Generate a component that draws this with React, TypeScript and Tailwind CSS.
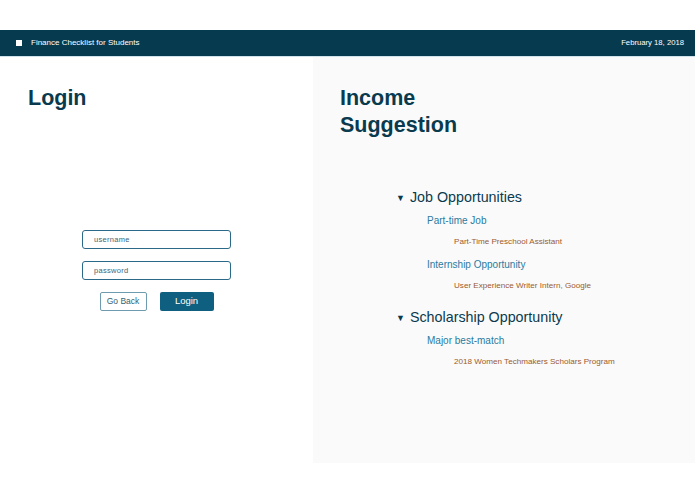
import React from 'react';

const font = { fontFamily: '"Liberation Sans", Arial, Helvetica, sans-serif' };

interface Leaf {
  label: string;
  items: string[];
}

interface Section {
  title: string;
  groups: Leaf[];
}

const sections: Section[] = [
  {
    title: 'Job Opportunities',
    groups: [
      { label: 'Part-time Job', items: ['Part-Time Preschool Assistant'] },
      { label: 'Internship Opportunity', items: ['User Experience Writer Intern, Google'] },
    ],
  },
  {
    title: 'Scholarship Opportunity',
    groups: [{ label: 'Major best-match', items: ['2018 Women Techmakers Scholars Program'] }],
  },
];

function NavBar() {
  return (
    <div className="flex h-[27px] items-center justify-between bg-[#063a4f] pl-4 pr-[11px] border-b border-[#cfe3ec]">
      <div className="flex items-center gap-[9px]">
        <span className="block h-[6px] w-[6px] bg-white" />
        <span className="text-[8px] text-white">Finance Checklist for Students</span>
      </div>
      <span className="text-[7.7px] text-white">February 18, 2018</span>
    </div>
  );
}

function LoginPanel() {
  return (
    <div className="flex w-[313px] flex-col bg-white pl-[28px] pt-[28px]">
      <h1 className="text-[21.5px] font-bold leading-[27px] text-[#0a3a4e]">Login</h1>

      <div className="mt-[118px] flex w-[257px] flex-col items-center gap-[12px]">
        <div className="flex h-[19px] w-[149px] items-center rounded-[3px] border-[1.5px] border-[#2a6a88] pl-[11px]">
          <span className="text-[7.5px] tracking-[0.3px] text-[#3d6578]">username</span>
        </div>
        <div className="flex h-[19px] w-[149px] items-center rounded-[3px] border-[1.5px] border-[#2a6a88] pl-[11px]">
          <span className="text-[7.5px] tracking-[0.3px] text-[#3d6578]">password</span>
        </div>
        <div className="flex gap-[13px]">
          <button className="flex h-[19px] w-[47px] items-center justify-center rounded-[2px] border border-[#6e9bb0] bg-white text-[8.5px] text-[#335f73]">
            Go Back
          </button>
          <button className="flex h-[19px] w-[54px] items-center justify-center rounded-[2px] bg-[#0f5f80] text-[9.5px] text-white">
            Login
          </button>
        </div>
      </div>
    </div>
  );
}

function SuggestionPanel() {
  return (
    <div className="flex h-[406px] flex-1 flex-col bg-[#fafafa] pl-[27px] pt-[28px]">
      <h1 className="text-[21.5px] font-bold leading-[27px] text-[#0a3a4e]">
        Income
        <br />
        Suggestion
      </h1>

      <div className="mt-[48px] flex flex-col gap-[10px] pl-[56px]">
        {sections.map((section) => (
          <div key={section.title} className="flex flex-col">
            <div className="flex h-[22px] items-center gap-[5px]">
              <span className="text-[9px] leading-none text-[#0a3a4e]">▼</span>
              <span className="text-[14.3px] text-[#0a3a4e]">{section.title}</span>
            </div>
            {section.groups.map((group) => (
              <div key={group.label} className="flex flex-col">
                <div className="flex h-[22px] items-center pl-[31px]">
                  <span className="text-[10px] text-[#2b7ba0]">{group.label}</span>
                </div>
                {group.items.map((item) => (
                  <div key={item} className="flex h-[22px] items-center pl-[58px]">
                    <span className="text-[8.1px] text-[#9a5a2e]">{item}</span>
                  </div>
                ))}
              </div>
            ))}
          </div>
        ))}
      </div>
    </div>
  );
}

export default function App() {
  return (
    <div className="h-[494px] w-[695px] bg-white" style={font}>
      <div className="h-[30px]" />
      <NavBar />
      <div className="flex">
        <LoginPanel />
        <SuggestionPanel />
      </div>
    </div>
  );
}
